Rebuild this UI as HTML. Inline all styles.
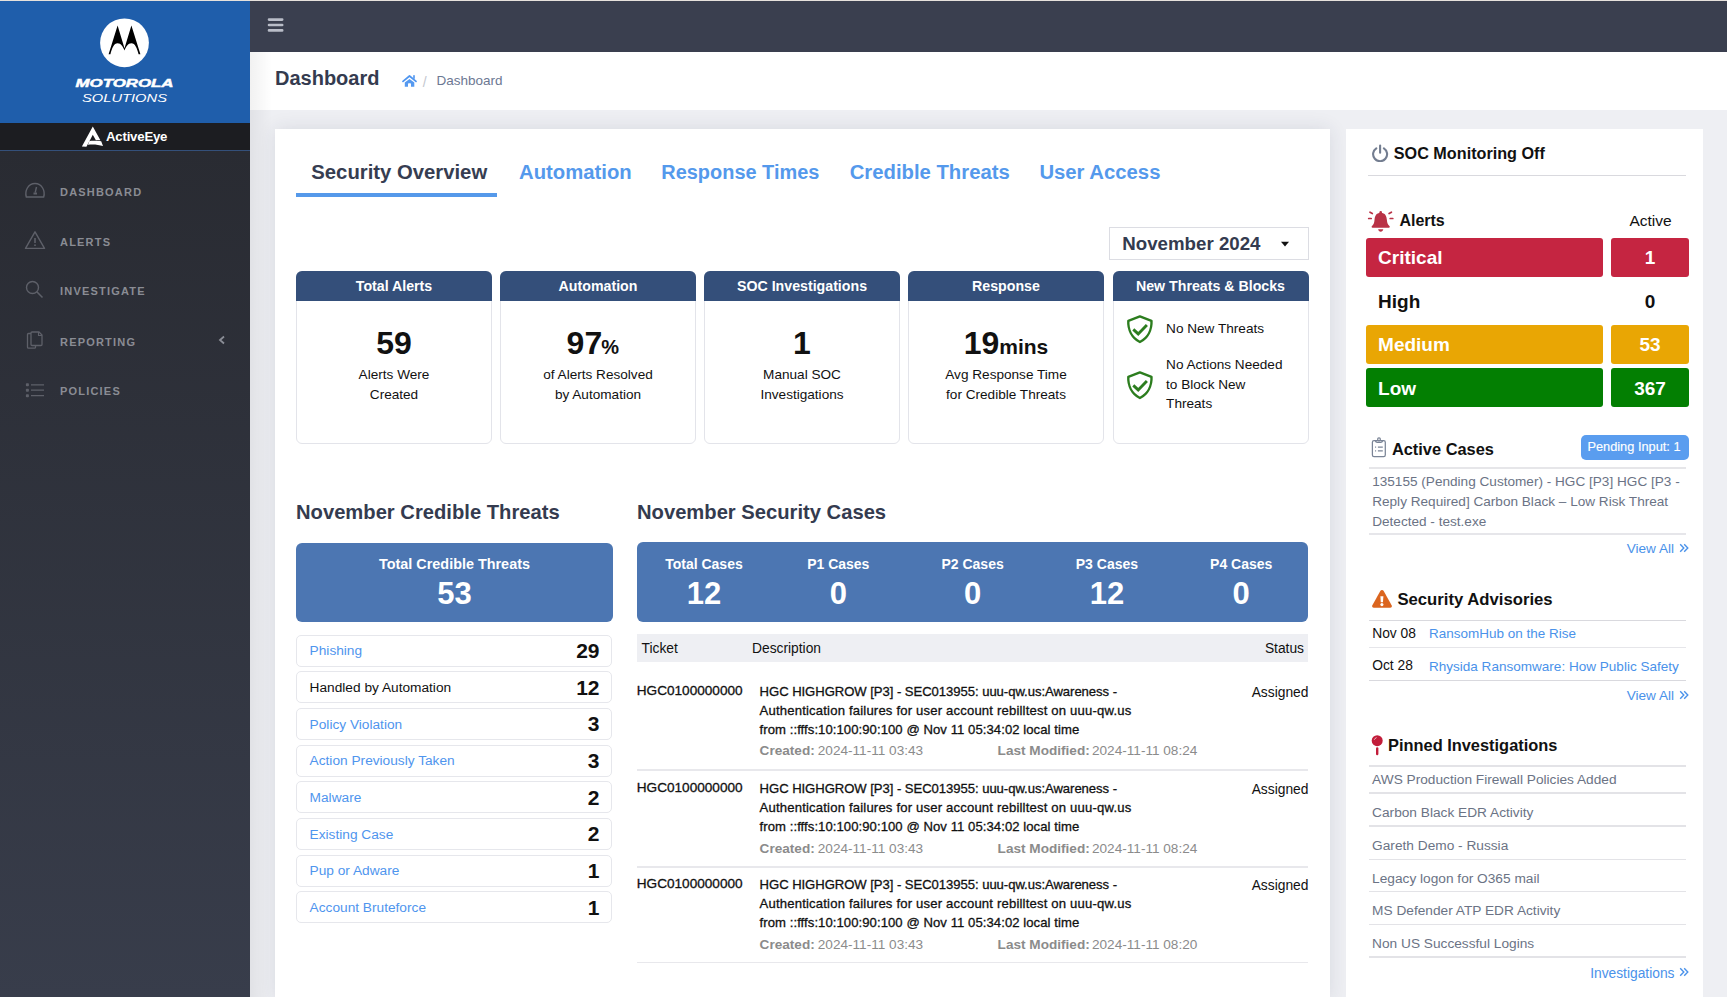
<!DOCTYPE html>
<html><head><meta charset="utf-8">
<style>
*{box-sizing:border-box;margin:0;padding:0}
html,body{width:1727px;height:997px;overflow:hidden;background:#eeeff3;font-family:"Liberation Sans",sans-serif;color:#111}
.a{position:absolute}
.t{position:absolute;line-height:1;white-space:nowrap}
#topline{left:0;top:0;width:1727px;height:1px;background:#e6e1dc}
#side{left:0;top:1px;width:250px;height:996px;background:linear-gradient(180deg,#292b32 15%,#383d4b 100%)}
#brand{left:0;top:0;width:250px;height:122px;background:#1f5eab}
#ae{left:0;top:122px;width:250px;height:28px;background:#1c1d21;border-bottom:1px solid #34507a}
.nav{left:0;width:250px;height:20px}
.nav .t{position:absolute;left:60px;top:4px;font-size:11px;font-weight:bold;letter-spacing:1.2px;color:#8a8c94}
.nav svg{position:absolute;left:24px;top:1px}
.med{-webkit-text-stroke:0.25px currentColor}
</style></head><body>
<div class="a" id="topline"></div>
<div class="a" id="side">
  <div class="a" id="brand">
    <svg class="a" style="left:95px;top:11px" width="60" height="60" viewBox="0 0 60 60">
      <circle cx="29.5" cy="30.8" r="24.4" fill="#fff"/>
      <path d="M13.6,42.3 L22.6,13.6 L29.5,36.3 L36.4,13.6 L45.4,42.3 L43.6,42.3 C42,36 40,31.2 36.4,31.2 C33,31.2 31,34.5 29.5,38.5 C28,34.5 26,31.2 22.6,31.2 C19,31.2 17,36 15.4,42.3 Z" fill="#000"/>
    </svg>
    <svg class="a" style="left:0;top:0" width="250" height="122">
      <text x="75.5" y="86" textLength="98" lengthAdjust="spacingAndGlyphs" font-family="Liberation Sans" font-weight="bold" font-style="italic" font-size="11" fill="#fff" stroke="#fff" stroke-width="0.45">MOTOROLA</text>
      <text x="82" y="101.3" textLength="85" lengthAdjust="spacingAndGlyphs" font-family="Liberation Sans" font-style="italic" font-size="10.8" fill="#fff">SOLUTIONS</text>
    </svg>
  </div>
  <div class="a" id="ae">
    <svg class="a" style="left:78px;top:-1px" width="30" height="30" viewBox="0 0 30 30">
      <path d="M3.9,24.4 L14.8,4.5 L22.4,18.3 L17.9,18.3 L14.8,12.7 L11.8,18.4 L8.4,24.7 Z" fill="#fff"/>
      <path d="M11.4,19.0 C15,18.6 20,18.8 23.2,19.3 L25,24.1 C21,22.6 15,22.2 9.9,22.7 Z" fill="#fff"/>
    </svg>
    <div class="a" style="left:106px;top:6px;font-size:13.2px;font-weight:bold;color:#fff;letter-spacing:-0.2px">ActiveEye</div>
  </div>
  <div class="a nav" style="top:181.8px">
    <svg style="top:-2.2px" width="22" height="20" viewBox="0 0 22 20"><path d="M2.3,16 C0.5,10 4,2.5 11,2.5 C18,2.5 21.5,10 19.7,16 Z" fill="none" stroke="#5e6069" stroke-width="1.4" stroke-linejoin="round"/><path d="M12.5,6 L11.2,11.5" stroke="#5e6069" stroke-width="1.4"/><rect x="9.5" y="11.5" width="3.5" height="2" fill="#5e6069"/></svg>
    <div class="t">DASHBOARD</div>
  </div>
  <div class="a nav" style="top:232px">
    <svg style="top:-2px" width="22" height="20" viewBox="0 0 22 20"><path d="M11,0.8 L20.5,17.4 L1.5,17.4 Z" fill="none" stroke="#5e6069" stroke-width="1.4" stroke-linejoin="round"/><rect x="10.2" y="7" width="1.6" height="5" fill="#5e6069"/><circle cx="11" cy="14.2" r="0.9" fill="#5e6069"/></svg>
    <div class="t">ALERTS</div>
  </div>
  <div class="a nav" style="top:281.4px">
    <svg style="top:-2.4px;left:23px" width="22" height="20" viewBox="0 0 22 20"><circle cx="9.5" cy="7.5" r="6" fill="none" stroke="#5e6069" stroke-width="1.4"/><path d="M13.8,11.8 L19.5,17.5" stroke="#5e6069" stroke-width="1.6"/></svg>
    <div class="t">INVESTIGATE</div>
  </div>
  <div class="a nav" style="top:331.6px">
    <svg style="top:-2.6px" width="22" height="20" viewBox="0 0 22 20"><path d="M7,3.5 L4.5,3.5 Q3.5,3.5 3.5,4.5 L3.5,17.2 Q3.5,18.2 4.5,18.2 L10.5,18.2 Q11.5,18.2 11.5,17.2 L11.5,15.5" fill="none" stroke="#5e6069" stroke-width="1.3"/><path d="M8,2 Q7,2 7,3 L7,14.5 Q7,15.5 8,15.5 L17,15.5 Q18,15.5 18,14.5 L18,5 L15,2 Z" fill="none" stroke="#5e6069" stroke-width="1.3" stroke-linejoin="round"/><path d="M14.5,2 L14.5,5.5 L18,5.5" fill="none" stroke="#5e6069" stroke-width="1.1"/></svg>
    <div class="t">REPORTING</div>
    <svg style="left:217px;top:2.5px" width="10" height="10" viewBox="0 0 10 10"><path d="M7,1.5 L3,5 L7,8.5" fill="none" stroke="#8b8e97" stroke-width="1.8"/></svg>
  </div>
  <div class="a nav" style="top:381.4px">
    <svg style="top:-0.9px" width="22" height="20" viewBox="0 0 22 20"><rect x="1.9" y="1.3" width="3" height="3" rx="0.8" fill="#5e6069"/><rect x="1.9" y="6.7" width="3" height="3" rx="0.8" fill="#5e6069"/><rect x="1.9" y="12.2" width="3" height="3" rx="0.8" fill="#5e6069"/><path d="M7,2.8 H20 M7,8.2 H20 M7,13.7 H20" stroke="#5e6069" stroke-width="1.2"/></svg>
    <div class="t">POLICIES</div>
  </div>
</div>
<div class="a" style="left:250.00px;top:1.00px;width:1477.00px;height:51.00px;background:#3a3f4f;"></div>
<svg class="a" style="left:267px;top:17px" width="18" height="16" viewBox="0 0 18 16"><path d="M2,2.6 H15.2 M2,8 H15.2 M2,13.4 H15.2" stroke="#b9bdc8" stroke-width="2.6" stroke-linecap="round"/></svg>
<div class="a" style="left:250.00px;top:52.00px;width:1477.00px;height:58.00px;background:#fff;"></div>
<div class="t" style="top:68.17px;font-size:20px;color:#343b4f;font-weight:bold;left:275.00px;">Dashboard</div>
<svg class="a" style="left:402px;top:74px" width="16" height="14" viewBox="0 0 16 14"><path d="M1,7.4 L7.5,2 L14,7.4" fill="none" stroke="#4f95ef" stroke-width="1.7" stroke-linecap="round" stroke-linejoin="round"/><rect x="11.2" y="1.2" width="1.6" height="3.6" fill="#4f95ef"/><path d="M7.5,4.9 L12.3,8.6 V12.8 H9 V9.9 Q9,9.2 8.3,9.2 H6.7 Q6,9.2 6,9.9 V12.8 H2.8 V8.6 Z" fill="#5599f0"/></svg>
<div class="t" style="top:75.15px;font-size:14px;color:#c3c7cf;left:422.80px;">/</div>
<div class="t" style="top:74.37px;font-size:13.5px;color:#6c7893;left:436.50px;">Dashboard</div>
<div class="a" style="left:275.00px;top:129.00px;width:1054.50px;height:871.00px;background:#fff;box-shadow:0 0 18px rgba(40,45,70,0.11)"></div>
<div class="t" style="top:161.82px;font-size:20.3px;color:#363d51;font-weight:bold;left:311.30px;">Security Overview</div>
<div class="t" style="top:161.82px;font-size:20.3px;color:#5499ec;font-weight:bold;left:519.00px;">Automation</div>
<div class="t" style="top:162.51px;font-size:19.95px;color:#5499ec;font-weight:bold;left:661.30px;">Response Times</div>
<div class="t" style="top:161.82px;font-size:20.3px;color:#5499ec;font-weight:bold;left:849.70px;">Credible Threats</div>
<div class="t" style="top:161.82px;font-size:20.3px;color:#5499ec;font-weight:bold;left:1039.40px;">User Access</div>
<div class="a" style="left:296.00px;top:193.00px;width:201.00px;height:3.60px;background:#5599ea;"></div>
<div class="a" style="left:1108.50px;top:227.30px;width:200.00px;height:32.40px;background:#fff;border:1px solid #dcdde3"></div>
<div class="t" style="top:235.37px;font-size:18.7px;color:#343b4f;font-weight:bold;left:1122.30px;">November 2024</div>
<svg class="a" style="left:1280px;top:241px" width="10" height="7" viewBox="0 0 10 7"><path d="M1,0.7 H9 L5,5.5 Z" fill="#111"/></svg>
<div class="a" style="left:296.00px;top:270.80px;width:196.00px;height:173.20px;background:#fff;border:1px solid #e3e4ea;border-radius:6px"></div>
<div class="a" style="left:296.00px;top:270.80px;width:196.00px;height:30.20px;background:#344f7a;border-radius:6px 6px 0 0"></div>
<div class="t" style="top:278.98px;font-size:14.2px;color:#fff;font-weight:bold;left:296.00px;width:196px;text-align:center;">Total Alerts</div>
<div class="a" style="left:500.00px;top:270.80px;width:196.00px;height:173.20px;background:#fff;border:1px solid #e3e4ea;border-radius:6px"></div>
<div class="a" style="left:500.00px;top:270.80px;width:196.00px;height:30.20px;background:#344f7a;border-radius:6px 6px 0 0"></div>
<div class="t" style="top:278.98px;font-size:14.2px;color:#fff;font-weight:bold;left:500.00px;width:196px;text-align:center;">Automation</div>
<div class="a" style="left:704.00px;top:270.80px;width:196.00px;height:173.20px;background:#fff;border:1px solid #e3e4ea;border-radius:6px"></div>
<div class="a" style="left:704.00px;top:270.80px;width:196.00px;height:30.20px;background:#344f7a;border-radius:6px 6px 0 0"></div>
<div class="t" style="top:278.98px;font-size:14.2px;color:#fff;font-weight:bold;left:704.00px;width:196px;text-align:center;">SOC Investigations</div>
<div class="a" style="left:908.00px;top:270.80px;width:196.00px;height:173.20px;background:#fff;border:1px solid #e3e4ea;border-radius:6px"></div>
<div class="a" style="left:908.00px;top:270.80px;width:196.00px;height:30.20px;background:#344f7a;border-radius:6px 6px 0 0"></div>
<div class="t" style="top:278.98px;font-size:14.2px;color:#fff;font-weight:bold;left:908.00px;width:196px;text-align:center;">Response</div>
<div class="a" style="left:1112.50px;top:270.80px;width:196.00px;height:173.20px;background:#fff;border:1px solid #e3e4ea;border-radius:6px"></div>
<div class="a" style="left:1112.50px;top:270.80px;width:196.00px;height:30.20px;background:#344f7a;border-radius:6px 6px 0 0"></div>
<div class="t" style="top:278.98px;font-size:14.2px;color:#fff;font-weight:bold;left:1112.50px;width:196px;text-align:center;">New Threats &amp; Blocks</div>
<div class="t" style="top:327.11px;font-size:32px;color:#111;font-weight:bold;left:296.00px;width:196px;text-align:center;">59</div>
<div class="t" style="top:327.11px;font-size:32px;color:#111;font-weight:bold;left:566.60px;">97<span style="font-size:20px;margin-left:-1px">%</span></div>
<div class="t" style="top:327.11px;font-size:32px;color:#111;font-weight:bold;left:704.00px;width:196px;text-align:center;">1</div>
<div class="t" style="top:327.11px;font-size:32px;color:#111;font-weight:bold;left:908.00px;width:196px;text-align:center;">19<span style="font-size:21px">mins</span></div>
<div class="t" style="top:367.89px;font-size:13.6px;color:#111;left:296.00px;width:196px;text-align:center;">Alerts Were</div>
<div class="t" style="top:387.79px;font-size:13.6px;color:#111;left:296.00px;width:196px;text-align:center;">Created</div>
<div class="t" style="top:367.89px;font-size:13.6px;color:#111;left:500.00px;width:196px;text-align:center;">of Alerts Resolved</div>
<div class="t" style="top:387.79px;font-size:13.6px;color:#111;left:500.00px;width:196px;text-align:center;">by Automation</div>
<div class="t" style="top:367.89px;font-size:13.6px;color:#111;left:704.00px;width:196px;text-align:center;">Manual SOC</div>
<div class="t" style="top:387.79px;font-size:13.6px;color:#111;left:704.00px;width:196px;text-align:center;">Investigations</div>
<div class="t" style="top:367.89px;font-size:13.6px;color:#111;left:908.00px;width:196px;text-align:center;">Avg Response Time</div>
<div class="t" style="top:387.79px;font-size:13.6px;color:#111;left:908.00px;width:196px;text-align:center;">for Credible Threats</div>
<svg class="a" style="left:1125.5px;top:314.5px" width="28" height="29" viewBox="0 0 28 29"><path d="M13.9,1.4 L25.5,5.9 C25.9,14.5 22,22.8 13.9,27 C5.8,22.8 1.9,14.5 2.3,5.9 Z" fill="none" stroke="#2c7d1e" stroke-width="2.4" stroke-linejoin="round"/><path d="M7.3,14.4 L12.2,18.9 L20.9,10.1" fill="none" stroke="#2c7d1e" stroke-width="2.9"/></svg>
<svg class="a" style="left:1125.5px;top:370.5px" width="28" height="29" viewBox="0 0 28 29"><path d="M13.9,1.4 L25.5,5.9 C25.9,14.5 22,22.8 13.9,27 C5.8,22.8 1.9,14.5 2.3,5.9 Z" fill="none" stroke="#2c7d1e" stroke-width="2.4" stroke-linejoin="round"/><path d="M7.3,14.4 L12.2,18.9 L20.9,10.1" fill="none" stroke="#2c7d1e" stroke-width="2.9"/></svg>
<div class="t" style="top:321.99px;font-size:13.6px;color:#111;left:1166.10px;">No New Threats</div>
<div class="t" style="top:357.89px;font-size:13.6px;color:#111;left:1166.10px;">No Actions Needed</div>
<div class="t" style="top:377.69px;font-size:13.6px;color:#111;left:1166.10px;">to Block New</div>
<div class="t" style="top:396.99px;font-size:13.6px;color:#111;left:1166.10px;">Threats</div>
<div class="t" style="top:502.20px;font-size:20.2px;color:#343b4f;font-weight:bold;left:296.00px;">November Credible Threats</div>
<div class="a" style="left:296.00px;top:542.70px;width:317.00px;height:79.60px;background:#4c76b2;border-radius:6px"></div>
<div class="t" style="top:557.41px;font-size:14.4px;color:#fff;font-weight:bold;left:304.50px;width:300px;text-align:center;">Total Credible Threats</div>
<div class="t" style="top:577.76px;font-size:31px;color:#fff;font-weight:bold;left:304.50px;width:300px;text-align:center;">53</div>
<div class="a" style="left:296.30px;top:634.70px;width:316.20px;height:32.00px;background:#fff;border:1px solid #e6e7ec;border-radius:5px"></div>
<div class="t" style="top:644.30px;font-size:13.7px;color:#4f95ee;left:309.60px;">Phishing</div>
<div class="t" style="top:640.02px;font-size:21px;color:#111;font-weight:bold;right:1127.50px;">29</div>
<div class="a" style="left:296.30px;top:671.37px;width:316.20px;height:32.00px;background:#fff;border:1px solid #e6e7ec;border-radius:5px"></div>
<div class="t" style="top:680.97px;font-size:13.7px;color:#111;left:309.60px;">Handled by Automation</div>
<div class="t" style="top:676.69px;font-size:21px;color:#111;font-weight:bold;right:1127.50px;">12</div>
<div class="a" style="left:296.30px;top:708.04px;width:316.20px;height:32.00px;background:#fff;border:1px solid #e6e7ec;border-radius:5px"></div>
<div class="t" style="top:717.64px;font-size:13.7px;color:#4f95ee;left:309.60px;">Policy Violation</div>
<div class="t" style="top:713.36px;font-size:21px;color:#111;font-weight:bold;right:1127.50px;">3</div>
<div class="a" style="left:296.30px;top:744.71px;width:316.20px;height:32.00px;background:#fff;border:1px solid #e6e7ec;border-radius:5px"></div>
<div class="t" style="top:754.31px;font-size:13.7px;color:#4f95ee;left:309.60px;">Action Previously Taken</div>
<div class="t" style="top:750.03px;font-size:21px;color:#111;font-weight:bold;right:1127.50px;">3</div>
<div class="a" style="left:296.30px;top:781.38px;width:316.20px;height:32.00px;background:#fff;border:1px solid #e6e7ec;border-radius:5px"></div>
<div class="t" style="top:790.98px;font-size:13.7px;color:#4f95ee;left:309.60px;">Malware</div>
<div class="t" style="top:786.70px;font-size:21px;color:#111;font-weight:bold;right:1127.50px;">2</div>
<div class="a" style="left:296.30px;top:818.05px;width:316.20px;height:32.00px;background:#fff;border:1px solid #e6e7ec;border-radius:5px"></div>
<div class="t" style="top:827.65px;font-size:13.7px;color:#4f95ee;left:309.60px;">Existing Case</div>
<div class="t" style="top:823.37px;font-size:21px;color:#111;font-weight:bold;right:1127.50px;">2</div>
<div class="a" style="left:296.30px;top:854.72px;width:316.20px;height:32.00px;background:#fff;border:1px solid #e6e7ec;border-radius:5px"></div>
<div class="t" style="top:864.32px;font-size:13.7px;color:#4f95ee;left:309.60px;">Pup or Adware</div>
<div class="t" style="top:860.04px;font-size:21px;color:#111;font-weight:bold;right:1127.50px;">1</div>
<div class="a" style="left:296.30px;top:891.39px;width:316.20px;height:32.00px;background:#fff;border:1px solid #e6e7ec;border-radius:5px"></div>
<div class="t" style="top:900.99px;font-size:13.7px;color:#4f95ee;left:309.60px;">Account Bruteforce</div>
<div class="t" style="top:896.71px;font-size:21px;color:#111;font-weight:bold;right:1127.50px;">1</div>
<div class="t" style="top:502.20px;font-size:20.2px;color:#343b4f;font-weight:bold;left:637.00px;">November Security Cases</div>
<div class="a" style="left:636.80px;top:542.20px;width:671.60px;height:79.40px;background:#4c76b2;border-radius:6px"></div>
<div class="t" style="top:557.25px;font-size:14px;color:#fff;font-weight:bold;left:636.96px;width:134px;text-align:center;">Total Cases</div>
<div class="t" style="top:577.86px;font-size:31px;color:#fff;font-weight:bold;left:636.96px;width:134px;text-align:center;">12</div>
<div class="t" style="top:557.25px;font-size:14px;color:#fff;font-weight:bold;left:771.28px;width:134px;text-align:center;">P1 Cases</div>
<div class="t" style="top:577.86px;font-size:31px;color:#fff;font-weight:bold;left:771.28px;width:134px;text-align:center;">0</div>
<div class="t" style="top:557.25px;font-size:14px;color:#fff;font-weight:bold;left:905.60px;width:134px;text-align:center;">P2 Cases</div>
<div class="t" style="top:577.86px;font-size:31px;color:#fff;font-weight:bold;left:905.60px;width:134px;text-align:center;">0</div>
<div class="t" style="top:557.25px;font-size:14px;color:#fff;font-weight:bold;left:1039.92px;width:134px;text-align:center;">P3 Cases</div>
<div class="t" style="top:577.86px;font-size:31px;color:#fff;font-weight:bold;left:1039.92px;width:134px;text-align:center;">12</div>
<div class="t" style="top:557.25px;font-size:14px;color:#fff;font-weight:bold;left:1174.24px;width:134px;text-align:center;">P4 Cases</div>
<div class="t" style="top:577.86px;font-size:31px;color:#fff;font-weight:bold;left:1174.24px;width:134px;text-align:center;">0</div>
<div class="a" style="left:636.80px;top:634.00px;width:671.60px;height:27.60px;background:#eeeff3;"></div>
<div class="t" style="top:641.62px;font-size:13.8px;color:#111;left:641.60px;">Ticket</div>
<div class="t" style="top:641.62px;font-size:13.8px;color:#111;left:752.00px;">Description</div>
<div class="t" style="top:641.62px;font-size:13.8px;color:#111;right:423.00px;">Status</div>
<div class="t" style="top:683.99px;font-size:13.6px;color:#111;left:636.80px;-webkit-text-stroke:0.3px #111">HGC0100000000</div>
<div class="t" style="top:684.71px;font-size:13.1px;color:#111;left:759.60px;letter-spacing:-0.05px;-webkit-text-stroke:0.3px #111">HGC HIGHGROW [P3] - SEC013955: uuu-qw.us:Awareness -</div>
<div class="t" style="top:703.81px;font-size:13.1px;color:#111;left:759.60px;letter-spacing:0.18px;-webkit-text-stroke:0.3px #111">Authentication failures for user account rebilltest on uuu-qw.us</div>
<div class="t" style="top:722.61px;font-size:13.1px;color:#111;left:759.60px;letter-spacing:0.066px;-webkit-text-stroke:0.3px #111">from ::fffs:10:100:90:100 @ Nov 11 05:34:02 local time</div>
<div class="t" style="top:744.49px;font-size:13.6px;color:#8b8b8b;font-weight:bold;left:759.60px;">Created:</div>
<div class="t" style="top:744.49px;font-size:13.6px;color:#8b8b8b;left:817.80px;">2024-11-11 03:43</div>
<div class="t" style="top:744.49px;font-size:13.6px;color:#8b8b8b;font-weight:bold;left:997.60px;">Last Modified:</div>
<div class="t" style="top:744.49px;font-size:13.6px;color:#8b8b8b;left:1092.00px;">2024-11-11 08:24</div>
<div class="t" style="top:685.62px;font-size:13.8px;color:#111;right:418.60px;">Assigned</div>
<div class="a" style="left:636.80px;top:769.30px;width:671.60px;height:1.50px;background:#e8e8ec;"></div>
<div class="t" style="top:781.19px;font-size:13.6px;color:#111;left:636.80px;-webkit-text-stroke:0.3px #111">HGC0100000000</div>
<div class="t" style="top:781.91px;font-size:13.1px;color:#111;left:759.60px;letter-spacing:-0.05px;-webkit-text-stroke:0.3px #111">HGC HIGHGROW [P3] - SEC013955: uuu-qw.us:Awareness -</div>
<div class="t" style="top:801.01px;font-size:13.1px;color:#111;left:759.60px;letter-spacing:0.18px;-webkit-text-stroke:0.3px #111">Authentication failures for user account rebilltest on uuu-qw.us</div>
<div class="t" style="top:819.81px;font-size:13.1px;color:#111;left:759.60px;letter-spacing:0.066px;-webkit-text-stroke:0.3px #111">from ::fffs:10:100:90:100 @ Nov 11 05:34:02 local time</div>
<div class="t" style="top:841.69px;font-size:13.6px;color:#8b8b8b;font-weight:bold;left:759.60px;">Created:</div>
<div class="t" style="top:841.69px;font-size:13.6px;color:#8b8b8b;left:817.80px;">2024-11-11 03:43</div>
<div class="t" style="top:841.69px;font-size:13.6px;color:#8b8b8b;font-weight:bold;left:997.60px;">Last Modified:</div>
<div class="t" style="top:841.69px;font-size:13.6px;color:#8b8b8b;left:1092.00px;">2024-11-11 08:24</div>
<div class="t" style="top:782.82px;font-size:13.8px;color:#111;right:418.60px;">Assigned</div>
<div class="a" style="left:636.80px;top:866.00px;width:671.60px;height:1.50px;background:#e8e8ec;"></div>
<div class="t" style="top:877.29px;font-size:13.6px;color:#111;left:636.80px;-webkit-text-stroke:0.3px #111">HGC0100000000</div>
<div class="t" style="top:878.01px;font-size:13.1px;color:#111;left:759.60px;letter-spacing:-0.05px;-webkit-text-stroke:0.3px #111">HGC HIGHGROW [P3] - SEC013955: uuu-qw.us:Awareness -</div>
<div class="t" style="top:897.11px;font-size:13.1px;color:#111;left:759.60px;letter-spacing:0.18px;-webkit-text-stroke:0.3px #111">Authentication failures for user account rebilltest on uuu-qw.us</div>
<div class="t" style="top:915.91px;font-size:13.1px;color:#111;left:759.60px;letter-spacing:0.066px;-webkit-text-stroke:0.3px #111">from ::fffs:10:100:90:100 @ Nov 11 05:34:02 local time</div>
<div class="t" style="top:938.39px;font-size:13.6px;color:#8b8b8b;font-weight:bold;left:759.60px;">Created:</div>
<div class="t" style="top:938.39px;font-size:13.6px;color:#8b8b8b;left:817.80px;">2024-11-11 03:43</div>
<div class="t" style="top:938.39px;font-size:13.6px;color:#8b8b8b;font-weight:bold;left:997.60px;">Last Modified:</div>
<div class="t" style="top:938.39px;font-size:13.6px;color:#8b8b8b;left:1092.00px;">2024-11-11 08:20</div>
<div class="t" style="top:878.92px;font-size:13.8px;color:#111;right:418.60px;">Assigned</div>
<div class="a" style="left:636.80px;top:961.80px;width:671.60px;height:1.50px;background:#e8e8ec;"></div>
<div class="a" style="left:250.00px;top:52.00px;width:22.00px;height:945.00px;background:linear-gradient(90deg,rgba(0,0,0,0.055),rgba(0,0,0,0));"></div>
<div class="a" style="left:1346.00px;top:129.00px;width:357.00px;height:871.00px;background:#fff;"></div>
<svg class="a" style="left:1371px;top:144px" width="18" height="18" viewBox="0 0 18 18"><path d="M5.3,4.3 A7,7 0 1 0 12.9,4.3" fill="none" stroke="#737d90" stroke-width="2.1" stroke-linecap="round"/><path d="M9.1,1.6 V8.8" stroke="#737d90" stroke-width="2.1" stroke-linecap="round"/></svg>
<div class="t" style="top:145.29px;font-size:16.2px;color:#111;font-weight:bold;left:1393.80px;">SOC Monitoring Off</div>
<div class="a" style="left:1368.30px;top:175.00px;width:317.70px;height:1.30px;background:#d9d9de;"></div>
<svg class="a" style="left:1367px;top:210px" width="28" height="23" viewBox="0 0 28 23"><path d="M13.7,2.8 C9,2.8 7.8,6.5 7.5,10 C7.2,13 6.8,14.5 5,16 C4.3,16.6 4.5,17.8 5.5,17.8 H21.9 C22.9,17.8 23.1,16.6 22.4,16 C20.6,14.5 20.2,13 19.9,10 C19.6,6.5 18.4,2.8 13.7,2.8 Z" fill="#b93246"/><circle cx="13.7" cy="2.4" r="1.3" fill="#b93246"/><path d="M11.1,19.2 H16.3 C16,20.8 15,21.7 13.7,21.7 C12.4,21.7 11.4,20.8 11.1,19.2 Z" fill="#b93246"/><path d="M1.7,8.5 H4.2 M23.2,8.5 H25.8 M3,2.2 L5.3,3.5 M24.4,2.2 L22.1,3.5" stroke="#b93246" stroke-width="1.7" stroke-linecap="round"/></svg>
<div class="t" style="top:212.96px;font-size:16px;color:#111;font-weight:bold;left:1399.40px;">Alerts</div>
<div class="t" style="top:212.88px;font-size:15.5px;color:#111;right:55.40px;">Active</div>
<div class="a" style="left:1365.50px;top:238.00px;width:237.20px;height:38.80px;background:#c52541;border-radius:3px"></div>
<div class="a" style="left:1611.10px;top:238.00px;width:77.70px;height:38.80px;background:#c52541;border-radius:3px"></div>
<div class="t" style="top:248.42px;font-size:19px;color:#fff;font-weight:bold;left:1378.10px;">Critical</div>
<div class="t" style="top:248.42px;font-size:19px;color:#fff;font-weight:bold;left:1611.00px;width:78px;text-align:center;">1</div>
<div class="a" style="left:1365.50px;top:324.90px;width:237.20px;height:38.80px;background:#e9a604;border-radius:3px"></div>
<div class="a" style="left:1611.10px;top:324.90px;width:77.70px;height:38.80px;background:#e9a604;border-radius:3px"></div>
<div class="t" style="top:335.32px;font-size:19px;color:#fff;font-weight:bold;left:1378.10px;">Medium</div>
<div class="t" style="top:335.32px;font-size:19px;color:#fff;font-weight:bold;left:1611.00px;width:78px;text-align:center;">53</div>
<div class="a" style="left:1365.50px;top:368.10px;width:237.20px;height:39.30px;background:#037f02;border-radius:3px"></div>
<div class="a" style="left:1611.10px;top:368.10px;width:77.70px;height:39.30px;background:#037f02;border-radius:3px"></div>
<div class="t" style="top:378.52px;font-size:19px;color:#fff;font-weight:bold;left:1378.10px;">Low</div>
<div class="t" style="top:378.52px;font-size:19px;color:#fff;font-weight:bold;left:1611.00px;width:78px;text-align:center;">367</div>
<div class="t" style="top:291.92px;font-size:19px;color:#111;font-weight:bold;left:1378.10px;">High</div>
<div class="t" style="top:291.92px;font-size:19px;color:#111;font-weight:bold;left:1611.00px;width:78px;text-align:center;">0</div>
<svg class="a" style="left:1370px;top:436px" width="18" height="22" viewBox="0 0 18 22"><rect x="2.4" y="4.6" width="12.9" height="16" rx="1.6" fill="none" stroke="#7a8496" stroke-width="1.25"/><rect x="7.7" y="1.8" width="2.6" height="3" rx="1.2" fill="none" stroke="#7a8496" stroke-width="1.25"/><path d="M5.3,4.8 Q5.8,6.3 7.3,6.3 H10.7 Q12.2,6.3 12.7,4.8" fill="none" stroke="#7a8496" stroke-width="1.25"/><path d="M5.1,11.2 H6.1 M7.9,11.2 H12.8 M5.1,14.8 H6.1 M7.9,14.8 H12.8" stroke="#7a8496" stroke-width="1.25"/></svg>
<div class="t" style="top:441.02px;font-size:16.4px;color:#111;font-weight:bold;left:1391.90px;">Active Cases</div>
<div class="a" style="left:1580.50px;top:435.20px;width:108.50px;height:24.40px;background:#5a9def;border-radius:5px"></div>
<div class="t" style="top:440.86px;font-size:12.8px;color:#fff;left:1580.00px;width:108px;text-align:center;-webkit-text-stroke:0.15px #fff">Pending Input: 1</div>
<div class="a" style="left:1368.50px;top:466.80px;width:317.50px;height:2.00px;background:#e6e6e9;"></div>
<div class="t" style="top:475.09px;font-size:13.6px;color:#6b7385;left:1372.20px;">135155 (Pending Customer) - HGC [P3] HGC [P3 -</div>
<div class="t" style="top:494.59px;font-size:13.6px;color:#6b7385;left:1372.20px;">Reply Required] Carbon Black &ndash; Low Risk Threat</div>
<div class="t" style="top:514.89px;font-size:13.6px;color:#6b7385;left:1372.20px;">Detected - test.exe</div>
<div class="a" style="left:1368.50px;top:533.00px;width:317.50px;height:1.70px;background:#e6e6ea;"></div>
<div class="t" style="top:542.29px;font-size:13.6px;color:#4a92ea;right:53.00px;">View All</div>
<svg class="a" style="left:1679px;top:543px" width="10" height="10" viewBox="0 0 10 10"><path d="M1.2,1.2 L4.8,5 L1.2,8.8 M5.2,1.2 L8.8,5 L5.2,8.8" fill="none" stroke="#4a92ea" stroke-width="1.4"/></svg>
<svg class="a" style="left:1371px;top:589px" width="22" height="20" viewBox="0 0 22 20"><path d="M11,1 C11.8,1 12.3,1.4 12.7,2.1 L20.6,16.2 C21.3,17.5 20.6,18.8 19.1,18.8 H2.9 C1.4,18.8 0.7,17.5 1.4,16.2 L9.3,2.1 C9.7,1.4 10.2,1 11,1 Z" fill="#db651f"/><path d="M9.4,7.2 H12.4 L12,13.3 H9.8 Z" fill="#fff"/><circle cx="10.9" cy="15.6" r="1.55" fill="#fff"/></svg>
<div class="t" style="top:591.86px;font-size:16.7px;color:#111;font-weight:bold;left:1397.40px;">Security Advisories</div>
<div class="a" style="left:1368.50px;top:620.00px;width:317.50px;height:1.20px;background:#d9d9de;"></div>
<div class="t" style="top:627.02px;font-size:13.8px;color:#111;left:1372.20px;">Nov 08</div>
<div class="t" style="top:627.27px;font-size:13.5px;color:#4a92ea;left:1428.90px;">RansomHub on the Rise</div>
<div class="a" style="left:1368.50px;top:646.50px;width:317.50px;height:1.50px;background:#e6e6ea;"></div>
<div class="t" style="top:659.32px;font-size:13.8px;color:#111;left:1372.20px;">Oct 28</div>
<div class="t" style="top:659.53px;font-size:13.55px;color:#4a92ea;left:1428.90px;">Rhysida Ransomware: How Public Safety</div>
<div class="a" style="left:1368.50px;top:680.00px;width:317.50px;height:1.20px;background:#d9d9de;"></div>
<div class="t" style="top:688.79px;font-size:13.6px;color:#4a92ea;right:53.00px;">View All</div>
<svg class="a" style="left:1679px;top:689.5px" width="10" height="10" viewBox="0 0 10 10"><path d="M1.2,1.2 L4.8,5 L1.2,8.8 M5.2,1.2 L8.8,5 L5.2,8.8" fill="none" stroke="#4a92ea" stroke-width="1.4"/></svg>
<svg class="a" style="left:1370px;top:735px" width="14" height="21" viewBox="0 0 14 21"><circle cx="7.2" cy="5.7" r="5.5" fill="#c21d3a"/><path d="M7.2,13.4 V19" stroke="#c21d3a" stroke-width="2.4" stroke-linecap="round"/><path d="M4.2,4.8 Q4.8,3.2 6.6,2.6" fill="none" stroke="#fff" stroke-width="0.9" opacity="0.75"/></svg>
<div class="t" style="top:736.92px;font-size:16.4px;color:#111;font-weight:bold;left:1388.00px;">Pinned Investigations</div>
<div class="a" style="left:1368.50px;top:765.20px;width:317.50px;height:1.50px;background:#e3e3e7;"></div>
<div class="t" style="top:772.50px;font-size:13.7px;color:#6b7385;left:1372.10px;">AWS Production Firewall Policies Added</div>
<div class="a" style="left:1368.50px;top:792.40px;width:317.50px;height:1.50px;background:#e3e3e7;"></div>
<div class="t" style="top:805.80px;font-size:13.7px;color:#6b7385;left:1372.10px;">Carbon Black EDR Activity</div>
<div class="a" style="left:1368.50px;top:825.40px;width:317.50px;height:1.50px;background:#e3e3e7;"></div>
<div class="t" style="top:838.50px;font-size:13.7px;color:#6b7385;left:1372.10px;">Gareth Demo - Russia</div>
<div class="a" style="left:1368.50px;top:858.60px;width:317.50px;height:1.50px;background:#e3e3e7;"></div>
<div class="t" style="top:871.50px;font-size:13.7px;color:#6b7385;left:1372.10px;">Legacy logon for O365 mail</div>
<div class="a" style="left:1368.50px;top:890.90px;width:317.50px;height:1.50px;background:#e3e3e7;"></div>
<div class="t" style="top:904.00px;font-size:13.7px;color:#6b7385;left:1372.10px;">MS Defender ATP EDR Activity</div>
<div class="a" style="left:1368.50px;top:923.70px;width:317.50px;height:1.50px;background:#e3e3e7;"></div>
<div class="t" style="top:937.00px;font-size:13.7px;color:#6b7385;left:1372.10px;">Non US Successful Logins</div>
<div class="a" style="left:1368.50px;top:956.40px;width:317.50px;height:1.50px;background:#e3e3e7;"></div>
<div class="t" style="top:966.52px;font-size:13.8px;color:#4a92ea;right:52.50px;">Investigations</div>
<svg class="a" style="left:1679px;top:967.2px" width="10" height="10" viewBox="0 0 10 10"><path d="M1.2,1.2 L4.8,5 L1.2,8.8 M5.2,1.2 L8.8,5 L5.2,8.8" fill="none" stroke="#4a92ea" stroke-width="1.4"/></svg>
</body></html>
